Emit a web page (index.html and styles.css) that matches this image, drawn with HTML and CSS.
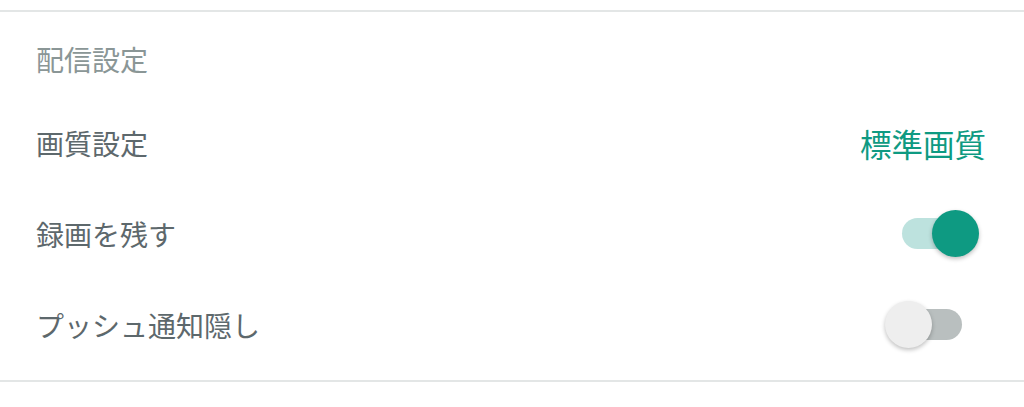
FILE: index.html
```html
<!DOCTYPE html>
<html lang="ja">
<head>
    <meta charset="UTF-8">
    <meta name="viewport" content="width=device-width, initial-scale=1.0">
    <title>配信設定</title>
    <link rel="stylesheet" href="styles.css">
</head>
<body>
    <section class="panel">
        <h3 class="panel-title">配信設定</h3>
        <div class="row">
            <span class="label">画質設定</span>
            <span class="value">標準画質</span>
        </div>
        <div class="row">
            <span class="label">録画を残す</span>
            <span class="switch on"><span class="track"></span><span class="thumb"></span></span>
        </div>
        <div class="row">
            <span class="label">プッシュ通知隠し</span>
            <span class="switch"><span class="track"></span><span class="thumb"></span></span>
        </div>
    </section>
</body>
</html>
```

FILE: styles.css
```css
body{
    margin: 0;
    background-color: white;
    font-family: "Noto Sans CJK JP", "Noto Sans", sans-serif;
}
.panel{
    margin-top: 10px;
    padding-bottom: 10px;
    border-top: 2px solid #e3e6e6;
    border-bottom: 2px solid #e3e6e6;
}
.panel-title{
    margin: 0;
    padding: 27px 36px 18px;
    height: 40px;
    line-height: 40px;
    font-size: 28px;
    font-weight: normal;
    color: #8a9696;
}
.row{
    display: flex;
    align-items: center;
    justify-content: space-between;
    height: 91px;
    padding: 0 38px 0 36px;
}
.label{
    font-size: 28px;
    color: #5d686c;
}
.value{
    font-size: 31.5px;
    color: #0e9a82;
}
.switch{
    position: relative;
    width: 94px;
    height: 47px;
    margin-right: 7px;
}
.track{
    position: absolute;
    left: 17px;
    top: 8px;
    width: 60px;
    height: 31px;
    border-radius: 16px;
    background-color: #b9bfbf;
}
.thumb{
    position: absolute;
    left: 0;
    top: 0;
    width: 47px;
    height: 47px;
    border-radius: 50%;
    background-color: #eeeeee;
    box-shadow: 0 2px 4px rgba(0,0,0,0.25);
}
.switch.on .track{
    background-color: #bde2de;
}
.switch.on .thumb{
    left: 47px;
    background-color: #0e9a82;
}
```
